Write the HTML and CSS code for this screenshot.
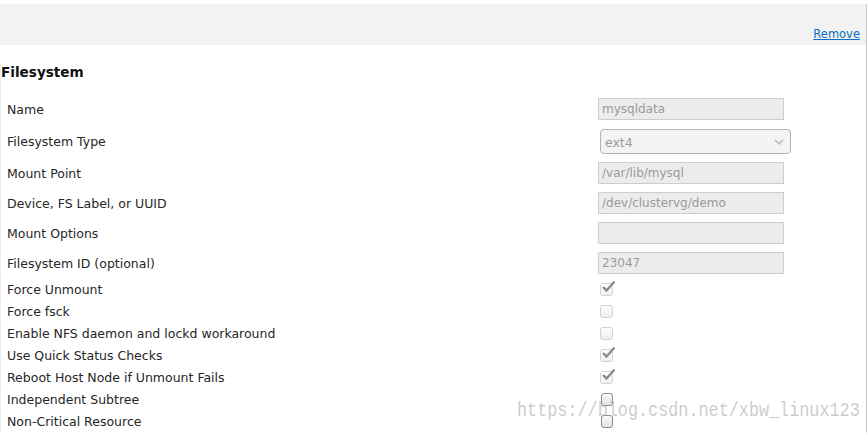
FILE: index.html
```html
<!DOCTYPE html>
<html lang="en">
<head>
  <meta charset="UTF-8">
  <title>Filesystem Resource</title>
  <link rel="stylesheet" href="styles.css">
</head>
<body>
  <div class="panel">
    <div class="bar">
      <a href="#" class="remove">Remove</a>
    </div>
    <div class="content">
      <h2>Filesystem</h2>
      <div class="fields">
        <div class="row text">
          <label>Name</label>
          <div class="field"><div class="input">mysqldata</div></div>
        </div>
        <div class="row text tall">
          <label>Filesystem Type</label>
          <div class="field">
            <div class="select">
              <span>ext4</span>
              <svg width="10" height="6" viewBox="0 0 10 6"><path d="M1 1 L5 5 L9 1" fill="none" stroke="#b5b5b5" stroke-width="1.4"/></svg>
            </div>
          </div>
        </div>
        <div class="row text">
          <label>Mount Point</label>
          <div class="field"><div class="input">/var/lib/mysql</div></div>
        </div>
        <div class="row text">
          <label>Device, FS Label, or UUID</label>
          <div class="field"><div class="input">/dev/clustervg/demo</div></div>
        </div>
        <div class="row text">
          <label>Mount Options</label>
          <div class="field"><div class="input"></div></div>
        </div>
        <div class="row text">
          <label>Filesystem ID (optional)</label>
          <div class="field"><div class="input">23047</div></div>
        </div>

        <div class="row check">
          <label>Force Unmount</label>
          <div class="field"><span class="box on"><svg width="15" height="13" viewBox="0 0 15 13"><path d="M2 7 L5.5 10.5 L13.5 1.5" fill="none" stroke="#8a8a8a" stroke-width="2.3"/></svg></span></div>
        </div>
        <div class="row check">
          <label>Force fsck</label>
          <div class="field"><span class="box"></span></div>
        </div>
        <div class="row check">
          <label>Enable NFS daemon and lockd workaround</label>
          <div class="field"><span class="box"></span></div>
        </div>
        <div class="row check">
          <label>Use Quick Status Checks</label>
          <div class="field"><span class="box on"><svg width="15" height="13" viewBox="0 0 15 13"><path d="M2 7 L5.5 10.5 L13.5 1.5" fill="none" stroke="#8a8a8a" stroke-width="2.3"/></svg></span></div>
        </div>
        <div class="row check">
          <label>Reboot Host Node if Unmount Fails</label>
          <div class="field"><span class="box on"><svg width="15" height="13" viewBox="0 0 15 13"><path d="M2 7 L5.5 10.5 L13.5 1.5" fill="none" stroke="#8a8a8a" stroke-width="2.3"/></svg></span></div>
        </div>
        <div class="row check">
          <label>Independent Subtree</label>
          <div class="field"><span class="box plain"></span></div>
        </div>
        <div class="row check">
          <label>Non-Critical Resource</label>
          <div class="field"><span class="box plain"></span></div>
        </div>
      </div>
    </div>
  </div>

  <div class="watermark">https://blog.csdn.net/xbw_linux123</div>
</body>
</html>
```

FILE: styles.css
```css
body {
  margin: 0;
  font-family: "DejaVu Sans", sans-serif;
  color: #222;
  background: #fff;
}

.panel {
  width: 866px;
  border-right: 1px solid #c9c9c9;
  margin-top: 4px;
}

.bar {
  height: 41px;
  background-color: #f2f2f2;
  display: flex;
  justify-content: flex-end;
  align-items: flex-end;
  padding: 0 6px 4px 0;
  box-sizing: border-box;
}

.remove {
  font-size: 11.5px;
  line-height: 14px;
  color: #0a6fc2;
  text-decoration: underline;
}

.content {
  border-left: 1px solid #ececec;
  padding-bottom: 10px;
}

h2 {
  font-size: 13.6px;
  line-height: 18px;
  font-weight: bold;
  margin: 18px 0 0 0;
  color: #111;
}

.fields {
  margin-top: 13px;
  padding-left: 6px;
}

.row {
  display: grid;
  grid-template-columns: 591px 1fr;
  align-items: center;
}

.row label {
  font-size: 12.5px;
  color: #262626;
}

.row.text {
  height: 30px;
}

.row.tall {
  height: 34px;
}

.row.check {
  height: 22px;
}

.input {
  width: 186px;
  height: 22px;
  box-sizing: border-box;
  border: 1px solid #cdcdcd;
  background-color: #ececec;
  color: #9a9a9a;
  font-size: 12px;
  line-height: 20px;
  padding: 0 3px;
}

.select {
  margin-left: 2px;
  width: 191px;
  height: 25px;
  box-sizing: border-box;
  border: 1px solid #b3b3b3;
  border-radius: 4px;
  background-color: #f4f4f4;
  color: #9a9a9a;
  font-size: 12.5px;
  display: flex;
  align-items: center;
  justify-content: space-between;
  padding: 2px 6px 0 4px;
}

.box {
  margin-left: 2px;
  width: 13px;
  height: 13px;
  box-sizing: border-box;
  border: 1px solid #d2d2d2;
  border-radius: 3px;
  background: linear-gradient(#fdfdfd, #efefef);
  display: block;
  position: relative;
}

.box svg {
  position: absolute;
  left: -0.5px;
  top: -4px;
}

.box.plain {
  width: 12px;
  height: 13px;
  border: 1px solid #8c8c8c;
  background: linear-gradient(#fafafa, #e4e4e4);
  margin-left: 3px;
}

.watermark {
  position: absolute;
  left: 517px;
  top: 401px;
  font-family: "Liberation Mono", monospace;
  font-size: 20px;
  line-height: 20px;
  color: rgba(160, 160, 160, 0.55);
  transform: scaleX(0.84);
  transform-origin: left top;
  white-space: nowrap;
}
```
